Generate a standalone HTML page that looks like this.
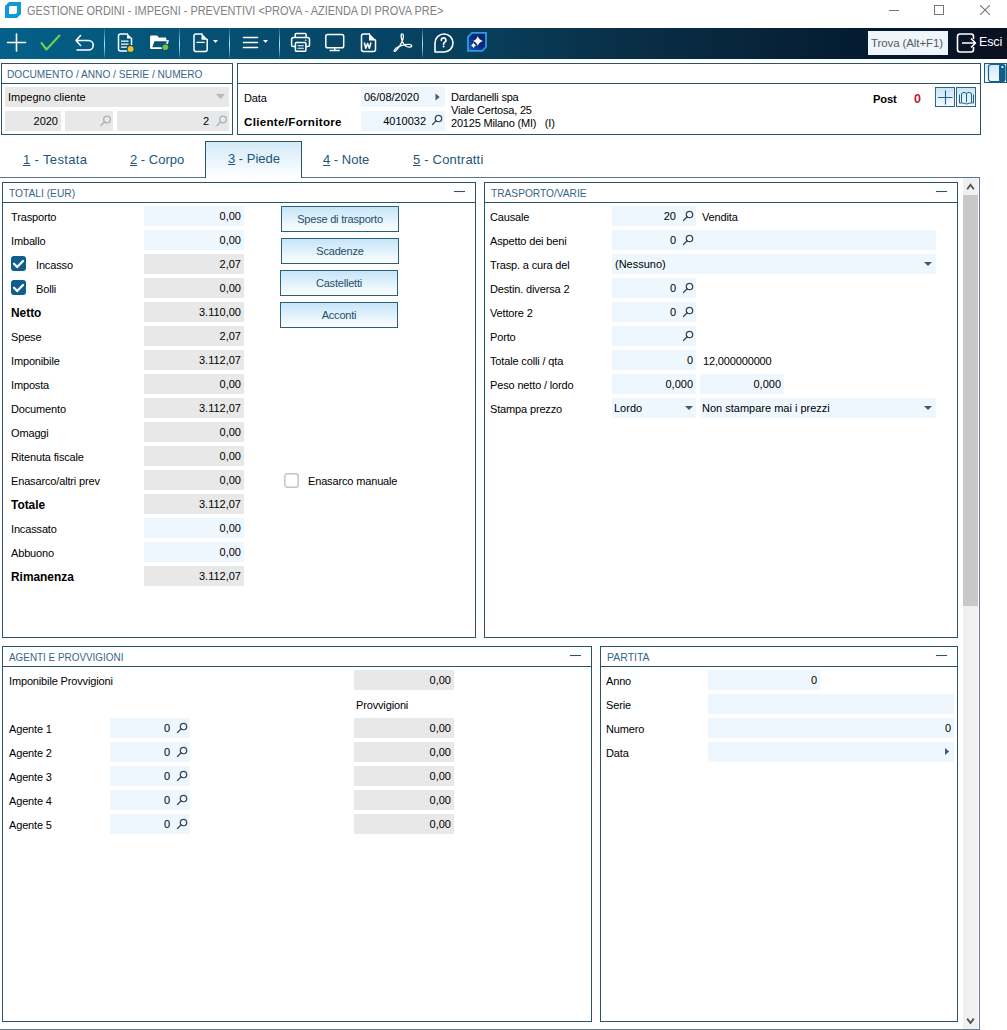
<!DOCTYPE html>
<html><head><meta charset="utf-8">
<style>
*{box-sizing:border-box;margin:0;padding:0}
html,body{width:1007px;height:1030px;overflow:hidden;background:#fff}
body{position:relative;font-family:"Liberation Sans",sans-serif;font-size:11px;color:#000}
.a{position:absolute}
.tx{position:absolute;white-space:nowrap;line-height:20px;height:20px;letter-spacing:-0.15px}
.pn{position:absolute;border:1px solid #2c5468;background:#fff}
.ph{position:absolute;left:0;right:0;top:0;height:20px;border-bottom:1px solid #2c5468}
.ht{position:absolute;left:6px;top:1px;line-height:19px;color:#36668a;font-size:11px;white-space:nowrap;transform:scaleX(.91);transform-origin:0 0}
.col{position:absolute;top:8px;width:11px;height:1px;background:#2c5468;box-shadow:0 0 1px #7fd0f0}
.fb{position:absolute;height:20px;background:#eef7fd;line-height:20px;text-align:right;padding-right:3px;white-space:nowrap}
.fg{position:absolute;height:20px;background:#e8e8e8;line-height:20px;text-align:right;padding-right:3px;white-space:nowrap}
.b{font-weight:bold}
.btn{position:absolute;height:26px;width:118px;border:1px solid #2c5f7c;background:linear-gradient(#c6e5f8,#fdfeff);color:#1f4e6e;text-align:center;line-height:24px;white-space:nowrap;letter-spacing:-0.2px}
.tab{position:absolute;top:141px;height:37px;line-height:20px;font-size:13px;color:#23557a;white-space:nowrap}
.tab u{text-decoration:underline}
.srch{position:absolute;width:11px;height:10px}
</style></head><body>

<!-- title bar -->
<svg class="a" style="left:0;top:0" width="26" height="22"><path fill-rule="evenodd" d="M9 2H21V14L17 18H5V6Z M10.5 6H17V12Q17 14 15 14H9V7.5Q9 6 10.5 6Z" fill="#0e9ad8"/></svg>
<div class="tx" style="left:27px;top:1px;line-height:20px;color:#808080;font-size:12px;letter-spacing:0;transform:scaleX(.911);transform-origin:0 0">GESTIONE ORDINI - IMPEGNI - PREVENTIVI &lt;PROVA - AZIENDA DI PROVA PRE&gt;</div>
<div class="a" style="left:889px;top:10px;width:10px;height:1px;background:#777"></div>
<div class="a" style="left:934px;top:5px;width:10px;height:10px;border:1px solid #777"></div>
<svg class="a" style="left:980px;top:5px" width="10" height="10"><path d="M0 0L10 10M10 0L0 10" stroke="#777" stroke-width="1.1"/></svg>

<!-- toolbar -->
<div class="a" style="left:0;top:28px;width:1007px;height:31px;background:linear-gradient(90deg,#04608a 0%,#04567a 13.9%,#06496a 30.8%,#083c58 50.1%,#09314a 59.6%,#072339 76.5%,#041c32 84.4%,#0a1020 100%)"></div>

<!-- toolbar icons -->
<svg class="a" style="left:0;top:28px" width="500" height="30" viewBox="0 28 500 30">
<g fill="none" stroke="#fff" stroke-width="1.6" stroke-linecap="round" stroke-linejoin="round">
 <path d="M16.5 34V51M7.5 42.5H25.5"/>
 <path d="M80.5 35.5L76 40.5L80.5 45.5M76.5 40.5H88.5A4.7 4.7 0 0 1 88.5 50H77"/>
 <path d="M127.5 34H120.5Q118.5 34 118.5 36V49Q118.5 51 120.5 51H127 M131.5 38.5V44.5" stroke-width="1.5"/>
 <path d="M121 41.2H128.5M121 44.2H128.5M121 47.2H127" stroke-width="1.3" stroke-linecap="butt"/>
 <path d="M202 34H196Q194 34 194 36V49.5Q194 51.5 196 51.5H205.2Q207.2 51.5 207.2 49.5V39.5" stroke-width="1.5"/>
 <path d="M197 42.3H204.2" stroke-width="1.3"/>
 <path d="M243.5 37.5H257.5M243.5 42.5H257.5M243.5 47.5H257.5"/>
 <path d="M295.2 37.5V34.5Q295.2 33.6 296.1 33.6H305.2Q306.1 33.6 306.1 34.5V37.5 M294.8 46.6H293.3Q291.6 46.6 291.6 44.9V39.6Q291.6 37.6 293.6 37.6H307.5Q309.5 37.6 309.5 39.6V44.9Q309.5 46.6 307.8 46.6H306.5 M296.5 42.5H304.8Q305.9 42.5 305.9 43.6V50.2Q305.9 51.3 304.8 51.3H296.5Q295.4 51.3 295.4 50.2V43.6Q295.4 42.5 296.5 42.5Z" stroke-width="1.5"/>
 <path d="M298 45.8H303.3M298 48.3H303.3" stroke-width="1.1"/>
 <path d="M327.6 34.5H341.9Q343.7 34.5 343.7 36.3V46Q343.7 47.8 341.9 47.8H327.6Q325.8 47.8 325.8 46V36.3Q325.8 34.5 327.6 34.5Z M334.7 48V50.3 M330.2 50.5H339.2" stroke-width="1.5"/>
 <path d="M369.5 34H363.5Q361.5 34 361.5 36V49.5Q361.5 51.5 363.5 51.5H373.5Q375.5 51.5 375.5 49.5V40" stroke-width="1.5"/>
 <path d="M435 43A9 9 0 1 1 444 52H435Z"/>
 <path d="M441.3 40.3A2.3 2.3 0 1 1 444.6 42.3Q443.6 43 443.6 44.3" stroke-width="1.7"/>
</g>
<g fill="#fff"><path d="M213 40H218L215.5 43Z M263 40H268L265.5 43Z"/><circle cx="443.6" cy="46.6" r="1"/><circle cx="305.7" cy="40.2" r="0.8"/></g>
<path d="M364.3 42.5L365.8 48.2L367.6 43.5L369.4 48.2L370.9 42.5" fill="none" stroke="#fff" stroke-width="1.5" stroke-linejoin="round"/>
<path d="M402.2 33.8C400.6 33.8 400.9 38 402.6 42C404.2 45.5 407.2 47.4 410.2 47C412.6 46.6 412.2 44.6 409.2 44.4C405.2 44.1 398.4 46 395.6 48.6C393.2 51 393.9 52.2 395.6 50.9C397.7 49.1 400.7 44.6 402.6 40.2C403.7 37.2 403.8 33.8 402.2 33.8Z" fill="none" stroke="#fff" stroke-width="1.3" stroke-linejoin="round"/>
<path d="M127 33.2L132.3 38.5H127Z" fill="#fff"/>
<path d="M201.5 33.25L207.95 39.7H201.5Z" fill="#fff"/>
<path d="M369 33.25L376.25 40.5H369Z" fill="#fff"/>
<path fill-rule="evenodd" d="M151.2 35.6H157.2L158.8 37.4H165.2Q166.3 37.4 166.3 38.5V40.2H169L166.4 48.2Q166.1 49 165.3 49H151.2Q150.1 49 150.1 47.9V36.7Q150.1 35.6 151.2 35.6Z M154.4 41.2H166.8L164.6 47.2H152.3Z" fill="#fff"/>
<circle cx="130.6" cy="48.9" r="3.9" fill="#0d4f75"/><circle cx="130.6" cy="48.9" r="2.9" fill="#f2c41a"/>
<circle cx="165.3" cy="47.2" r="3.7" fill="#0d4f75"/><circle cx="165.3" cy="47.2" r="2.8" fill="#76bf3c"/>
<path d="M41.5 43L46.5 49.5L59.5 35.5" fill="none" stroke="#72d04c" stroke-width="2.1" stroke-linecap="round" stroke-linejoin="round"/>

<defs><linearGradient id="aig" x1="0" y1="1" x2="1" y2="0"><stop offset="0" stop-color="#1a5fc0"/><stop offset="0.5" stop-color="#072a80"/><stop offset="1" stop-color="#0a1f5e"/></linearGradient></defs>
<path d="M472 32.9H486V47L482.3 50.9H468V36.8Z" fill="url(#aig)" stroke="#2a9ee0" stroke-width="1.8" stroke-linejoin="miter"/>
<path d="M477.8 36Q478.9 40 483 41.1Q478.9 42.2 477.8 46Q476.7 42.2 472.9 41.1Q476.7 40 477.8 36Z" fill="#fff"/>
<path d="M473.5 42.8Q474.4 44.5 476 45.4Q474.4 46.3 473.5 48Q472.6 46.3 471 45.4Q472.6 44.5 473.5 42.8Z" fill="#fff"/>
</svg>
<div class="a" style="left:104px;top:28px;width:1px;height:30px;background:linear-gradient(rgba(120,190,225,0.15),rgba(150,215,240,0.55) 25%,#b4e6fa 55%,rgba(150,215,240,0.5) 85%,rgba(120,190,225,0.1))"></div><div class="a" style="left:179px;top:28px;width:1px;height:30px;background:linear-gradient(rgba(120,190,225,0.15),rgba(150,215,240,0.55) 25%,#b4e6fa 55%,rgba(150,215,240,0.5) 85%,rgba(120,190,225,0.1))"></div><div class="a" style="left:229px;top:28px;width:1px;height:30px;background:linear-gradient(rgba(120,190,225,0.15),rgba(150,215,240,0.55) 25%,#b4e6fa 55%,rgba(150,215,240,0.5) 85%,rgba(120,190,225,0.1))"></div><div class="a" style="left:279px;top:28px;width:1px;height:30px;background:linear-gradient(rgba(120,190,225,0.15),rgba(150,215,240,0.55) 25%,#b4e6fa 55%,rgba(150,215,240,0.5) 85%,rgba(120,190,225,0.1))"></div><div class="a" style="left:422px;top:28px;width:1px;height:30px;background:linear-gradient(rgba(120,190,225,0.15),rgba(150,215,240,0.55) 25%,#b4e6fa 55%,rgba(150,215,240,0.5) 85%,rgba(120,190,225,0.1))"></div>
<div class="a" style="left:868px;top:31px;width:80px;height:24px;background:#eef5fb"></div>
<div class="tx" style="left:871px;top:33px;color:#5a5a5a;font-size:11.5px;letter-spacing:-0.1px">Trova (Alt+F1)</div>
<svg class="a" style="left:955px;top:32px" width="24" height="22" viewBox="955 32 24 22">
<path d="M973.5 39V36.5Q973.5 34 971 34H960Q957.5 34 957.5 36.5V49.5Q957.5 52 960 52H971Q973.5 52 973.5 49.5V47" fill="none" stroke="#fff" stroke-width="1.6"/>
<path d="M962 43H975.5M971 38.5L975.5 43L971 47.5" fill="none" stroke="#fff" stroke-width="1.6" stroke-linejoin="round"/>
</svg>
<div class="tx" style="left:979px;top:32px;color:#fff;font-size:12.5px">Esci</div>

<!-- document panel -->
<div class="pn" style="left:1px;top:63px;width:232px;height:72px">
 <div class="ph"><div class="ht" style="left:5px;transform:scaleX(.92)">DOCUMENTO / ANNO / SERIE / NUMERO</div></div>
</div>
<div class="fg" style="left:5px;top:87px;width:224px;text-align:left;padding-left:3px">Impegno cliente</div>
<svg class="a" style="left:216px;top:94px" width="10" height="6"><path d="M0 0H9L4.5 5Z" fill="#b4b8c0"/></svg>
<div class="fg" style="left:5px;top:111px;width:56px">2020</div>
<div class="fg" style="left:65px;top:111px;width:48px"></div>
<div class="fg" style="left:117px;top:111px;width:112px;padding-right:20px">2</div>
<svg class="a" style="left:0;top:0" width="240" height="140"><g fill="none" stroke="#a8b0b8" stroke-width="1.3" stroke-linecap="round">
<circle cx="107" cy="119.5" r="3.3"/><path d="M101 125.5L104.7 121.8"/>
<circle cx="223" cy="119.5" r="3.3"/><path d="M217 125.5L220.7 121.8"/>
</g></svg>

<!-- header panel -->
<div class="pn" style="left:237px;top:63px;width:744px;height:72px">
 <div class="ph"></div>
</div>
<div class="tx" style="left:244px;top:88px">Data</div>
<div class="tx b" style="left:244px;top:112px;font-size:11.6px;letter-spacing:0.3px">Cliente/Fornitore</div>
<div class="fb" style="left:361px;top:87px;width:84px;text-align:left;padding-left:3px">06/08/2020</div>
<svg class="a" style="left:435px;top:93px" width="6" height="8"><path d="M0.5 0.5L4.7 4L0.5 7.5Z" fill="#4a5670"/></svg>
<div class="fb" style="left:361px;top:111px;width:84px;padding-right:19px">4010032</div>
<svg class="a" style="left:0;top:0" width="460" height="140"><g fill="none" stroke="#3a4a5a" stroke-width="1.3" stroke-linecap="round">
<circle cx="438.5" cy="118.5" r="3.2"/><path d="M432.5 124.5L436.2 120.8"/>
</g></svg>
<div class="a" style="left:451px;top:91px;line-height:13.2px;white-space:nowrap;letter-spacing:-0.2px">Dardanelli spa<br>Viale Certosa, 25<br>20125 Milano (MI) &nbsp;&nbsp;(I)</div>
<div class="tx b" style="left:873px;top:89px;font-size:11.2px">Post</div>
<div class="tx b" style="left:914px;top:89px;font-size:12.5px;color:#bd2038">0</div>
<div class="a" style="left:935px;top:87px;width:20px;height:20px;border:1px solid #2c6585;background:linear-gradient(#c9e4f6,#f4faff)"></div>
<svg class="a" style="left:935px;top:87px" width="20" height="20"><path d="M10.5 3.5V17.5M3 10.5H17.5" stroke="#1f5f88" stroke-width="1.1"/></svg>
<div class="a" style="left:956px;top:87px;width:20px;height:20px;border:1px solid #2c6585;background:linear-gradient(#c9e4f6,#f4faff)"></div>
<svg class="a" style="left:956px;top:87px" width="20" height="20"><g fill="none" stroke="#1f6088" stroke-width="1"><path d="M5.5 15.5V6.5Q8 4 10.5 6.5Q13 4 15.5 6.5V15.5 M10.5 6.5V15.5 M3.5 7.5V16Q7 15.5 10.5 17Q14 15.5 17.5 16V7.5"/></g></svg>
<div class="a" style="left:984px;top:63px;width:23px;height:20px;border:1px solid #1e5a7e;background:linear-gradient(#cfe8f8,#f6fbff)"></div>
<svg class="a" style="left:984px;top:63px" width="23" height="20"><rect x="4.5" y="1.5" width="16.5" height="17" rx="2.5" fill="none" stroke="#1a5f8a" stroke-width="1.2"/><rect x="15" y="1.5" width="6" height="17" rx="1.5" fill="#0f5f8c"/><circle cx="18.4" cy="4" r="1.1" fill="#fff"/></svg>

<!-- tabs -->
<div class="a" style="left:0;top:177px;width:980px;height:1px;background:#5a7590"></div>
<div class="a" style="left:205px;top:141px;width:97px;height:37px;border:1px solid #2c5468;border-bottom:none;background:linear-gradient(#d3eaf8,#ffffff)"></div>
<div class="tab" style="left:23px;top:150px;letter-spacing:0.35px"><u>1</u> - Testata</div>
<div class="tab" style="left:130px;top:150px"><u>2</u> - Corpo</div>
<div class="tab" style="left:228px;top:149px"><u>3</u> - Piede</div>
<div class="tab" style="left:323px;top:150px"><u>4</u> - Note</div>
<div class="tab" style="left:413px;top:150px;letter-spacing:0.2px"><u>5</u> - Contratti</div>
<!-- outer frame -->
<div class="a" style="left:979px;top:177px;width:1px;height:853px;background:#6a7b96"></div>
<div class="a" style="left:0;top:1029px;width:980px;height:1px;background:#6a7b96"></div>
<!-- scrollbar -->
<div class="a" style="left:963px;top:178px;width:15px;height:851px;background:#f0f0f0"></div>
<div class="a" style="left:963px;top:195px;width:15px;height:411px;background:#c8c8c8"></div>
<svg class="a" style="left:963px;top:178px" width="15" height="851"><g fill="none" stroke="#505050" stroke-width="1.8"><path d="M4.2 11.3L7.5 6.8L10.8 11.3"/><path d="M4.2 840.6L7.5 845.1L10.8 840.6"/></g></svg>

<!-- TOTALI panel -->
<div class="pn" style="left:2px;top:182px;width:474px;height:456px">
 <div class="ph"><div class="ht" style="transform:scaleX(0.93)">TOTALI (EUR)</div>
<div class="col" style="left:451px"></div></div>
</div>
<!-- TRASPORTO panel -->
<div class="pn" style="left:484px;top:182px;width:474px;height:456px">
 <div class="ph"><div class="ht" style="transform:scaleX(0.925)">TRASPORTO/VARIE</div>
<div class="col" style="left:451px"></div></div>
</div>
<!-- AGENTI panel -->
<div class="pn" style="left:2px;top:646px;width:590px;height:376px">
 <div class="ph"><div class="ht" style="transform:scaleX(0.9)">AGENTI E PROVVIGIONI</div>
<div class="col" style="left:567px"></div></div>
</div>
<!-- PARTITA panel -->
<div class="pn" style="left:600px;top:646px;width:358px;height:376px">
 <div class="ph"><div class="ht" style="transform:scaleX(0.955)">PARTITA</div>
<div class="col" style="left:335px"></div></div>
</div>
<div class="tx" style="left:11px;top:207px">Trasporto</div>
<div class="fb" style="left:144px;top:206px;width:100px">0,00</div>
<div class="tx" style="left:11px;top:231px">Imballo</div>
<div class="fb" style="left:144px;top:230px;width:100px">0,00</div>
<svg class="a" style="left:11px;top:256px" width="15" height="15"><rect x="0" y="0" width="15" height="15" rx="3" fill="#0f5f8c"/><path d="M3 7.7L6.2 11.1L12 5" fill="none" stroke="#fff" stroke-width="2.2" stroke-linecap="round" stroke-linejoin="round"/></svg>
<div class="tx" style="left:36px;top:255px">Incasso</div>
<div class="fg" style="left:144px;top:254px;width:100px">2,07</div>
<svg class="a" style="left:11px;top:280px" width="15" height="15"><rect x="0" y="0" width="15" height="15" rx="3" fill="#0f5f8c"/><path d="M3 7.7L6.2 11.1L12 5" fill="none" stroke="#fff" stroke-width="2.2" stroke-linecap="round" stroke-linejoin="round"/></svg>
<div class="tx" style="left:36px;top:279px">Bolli</div>
<div class="fg" style="left:144px;top:278px;width:100px">0,00</div>
<div class="tx b" style="left:11px;top:303px;font-size:11.9px;letter-spacing:0">Netto</div>
<div class="fg" style="left:144px;top:302px;width:100px">3.110,00</div>
<div class="tx" style="left:11px;top:327px">Spese</div>
<div class="fg" style="left:144px;top:326px;width:100px">2,07</div>
<div class="tx" style="left:11px;top:351px">Imponibile</div>
<div class="fg" style="left:144px;top:350px;width:100px">3.112,07</div>
<div class="tx" style="left:11px;top:375px">Imposta</div>
<div class="fg" style="left:144px;top:374px;width:100px">0,00</div>
<div class="tx" style="left:11px;top:399px">Documento</div>
<div class="fg" style="left:144px;top:398px;width:100px">3.112,07</div>
<div class="tx" style="left:11px;top:423px">Omaggi</div>
<div class="fg" style="left:144px;top:422px;width:100px">0,00</div>
<div class="tx" style="left:11px;top:447px">Ritenuta fiscale</div>
<div class="fg" style="left:144px;top:446px;width:100px">0,00</div>
<div class="tx" style="left:11px;top:471px">Enasarco/altri prev</div>
<div class="fg" style="left:144px;top:470px;width:100px">0,00</div>
<div class="tx b" style="left:11px;top:495px;font-size:11.9px;letter-spacing:0">Totale</div>
<div class="fg" style="left:144px;top:494px;width:100px">3.112,07</div>
<div class="tx" style="left:11px;top:519px">Incassato</div>
<div class="fb" style="left:144px;top:518px;width:100px">0,00</div>
<div class="tx" style="left:11px;top:543px">Abbuono</div>
<div class="fb" style="left:144px;top:542px;width:100px">0,00</div>
<div class="tx b" style="left:11px;top:567px;font-size:11.9px;letter-spacing:0">Rimanenza</div>
<div class="fg" style="left:144px;top:566px;width:100px">3.112,07</div>
<div class="btn" style="left:281px;top:206px">Spese di trasporto</div>
<div class="btn" style="left:281px;top:238px">Scadenze</div>
<div class="btn" style="left:280px;top:270px">Castelletti</div>
<div class="btn" style="left:280px;top:302px">Acconti</div>
<svg class="a" style="left:283px;top:472px" width="17" height="17"><rect x="1.8" y="1.8" width="13.4" height="13.4" rx="2.5" fill="#fff" stroke="#c4c4c4" stroke-width="1.5"/></svg>
<div class="tx" style="left:308px;top:471px">Enasarco manuale</div>
<div class="tx" style="left:490px;top:207px">Causale</div>
<div class="tx" style="left:490px;top:231px">Aspetto dei beni</div>
<div class="tx" style="left:490px;top:255px">Trasp. a cura del</div>
<div class="tx" style="left:490px;top:279px">Destin. diversa 2</div>
<div class="tx" style="left:490px;top:303px">Vettore 2</div>
<div class="tx" style="left:490px;top:327px">Porto</div>
<div class="tx" style="left:490px;top:351px">Totale colli / qta</div>
<div class="tx" style="left:490px;top:375px">Peso netto / lordo</div>
<div class="tx" style="left:490px;top:399px">Stampa prezzo</div>
<div class="fb" style="left:612px;top:206px;width:84px;padding-right:20px">20</div>
<div class="tx" style="left:702px;top:207px">Vendita</div>
<div class="fb" style="left:612px;top:230px;width:324px;text-align:left;padding-left:61px"></div>
<div class="tx" style="left:612px;top:230px;width:64px;text-align:right;letter-spacing:0">0</div>
<div class="fb" style="left:612px;top:254px;width:324px;text-align:left;padding-left:3px">(Nessuno)</div>
<div class="fb" style="left:612px;top:278px;width:84px;padding-right:20px">0</div>
<div class="fb" style="left:612px;top:302px;width:84px;padding-right:20px">0</div>
<div class="fb" style="left:612px;top:326px;width:84px;padding-right:20px"></div>
<div class="fb" style="left:612px;top:350px;width:84px">0</div>
<div class="tx" style="left:703px;top:351px">12,000000000</div>
<div class="fb" style="left:612px;top:374px;width:84px">0,000</div>
<div class="fb" style="left:700px;top:374px;width:84px">0,000</div>
<div class="fb" style="left:612px;top:398px;width:84px;text-align:left;padding-left:2px">Lordo</div>
<div class="fb" style="left:700px;top:398px;width:236px;text-align:left;padding-left:2px">Non stampare mai i prezzi</div>
<div class="tx" style="left:9px;top:671px">Imponibile Provvigioni</div>
<div class="fg" style="left:354px;top:670px;width:100px">0,00</div>
<div class="tx" style="left:356px;top:695px">Provvigioni</div>
<div class="tx" style="left:9px;top:719px">Agente 1</div>
<div class="fb" style="left:110px;top:718px;width:80px;padding-right:20px">0</div>
<div class="fg" style="left:354px;top:718px;width:100px">0,00</div>
<div class="tx" style="left:9px;top:743px">Agente 2</div>
<div class="fb" style="left:110px;top:742px;width:80px;padding-right:20px">0</div>
<div class="fg" style="left:354px;top:742px;width:100px">0,00</div>
<div class="tx" style="left:9px;top:767px">Agente 3</div>
<div class="fb" style="left:110px;top:766px;width:80px;padding-right:20px">0</div>
<div class="fg" style="left:354px;top:766px;width:100px">0,00</div>
<div class="tx" style="left:9px;top:791px">Agente 4</div>
<div class="fb" style="left:110px;top:790px;width:80px;padding-right:20px">0</div>
<div class="fg" style="left:354px;top:790px;width:100px">0,00</div>
<div class="tx" style="left:9px;top:815px">Agente 5</div>
<div class="fb" style="left:110px;top:814px;width:80px;padding-right:20px">0</div>
<div class="fg" style="left:354px;top:814px;width:100px">0,00</div>
<div class="tx" style="left:606px;top:671px">Anno</div>
<div class="tx" style="left:606px;top:695px">Serie</div>
<div class="tx" style="left:606px;top:719px">Numero</div>
<div class="tx" style="left:606px;top:743px">Data</div>
<div class="fb" style="left:708px;top:670px;width:112px">0</div>
<div class="fb" style="left:708px;top:694px;width:246px"></div>
<div class="fb" style="left:708px;top:718px;width:246px">0</div>
<div class="fb" style="left:708px;top:742px;width:246px"></div>
<svg class="a" style="left:0;top:0" width="1007" height="1030"><g fill="#4a5670"><path d="M924 262H932L928 266Z"/><path d="M685 406H693L689 410Z"/><path d="M924 406H932L928 410Z"/></g><g fill="none" stroke="#3a4a5a" stroke-width="1.3" stroke-linecap="round"><circle cx="689.5" cy="214.5" r="3.2"/><path d="M683.5 220.5L687.2 216.8"/><circle cx="689.5" cy="238.5" r="3.2"/><path d="M683.5 244.5L687.2 240.8"/><circle cx="689.5" cy="286.5" r="3.2"/><path d="M683.5 292.5L687.2 288.8"/><circle cx="689.5" cy="310.5" r="3.2"/><path d="M683.5 316.5L687.2 312.8"/><circle cx="689.5" cy="334.5" r="3.2"/><path d="M683.5 340.5L687.2 336.8"/><circle cx="183.5" cy="726.5" r="3.2"/><path d="M177.5 732.5L181.2 728.8"/><circle cx="183.5" cy="750.5" r="3.2"/><path d="M177.5 756.5L181.2 752.8"/><circle cx="183.5" cy="774.5" r="3.2"/><path d="M177.5 780.5L181.2 776.8"/><circle cx="183.5" cy="798.5" r="3.2"/><path d="M177.5 804.5L181.2 800.8"/><circle cx="183.5" cy="822.5" r="3.2"/><path d="M177.5 828.5L181.2 824.8"/></g><path d="M945 748L949.2 751.5L945 755Z" fill="#4a5670"/></svg>
</body></html>
